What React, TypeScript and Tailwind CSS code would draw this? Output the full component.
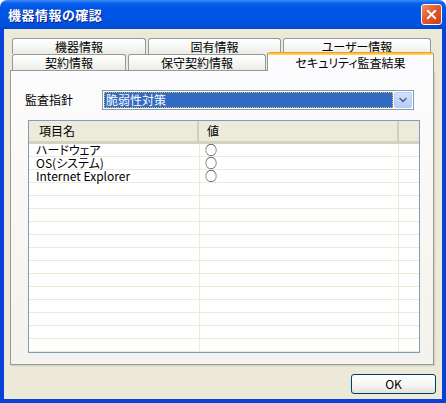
import { ChevronDown, X } from "lucide-react";

const rows = [
  { name: "ハードウェア", value: "○" },
  { name: "OS(システム)", value: "○" },
  { name: "Internet Explorer", value: "○" },
];

const blankRows = 13;

function Tab({ label, width }: { label: string; width: string }) {
  return (
    <div
      className={`${width} h-[16px] shrink-0 border border-b-0 border-[#919B9C] rounded-t-[3px] bg-[linear-gradient(to_bottom,#FFFFFF_0%,#F7F7F4_50%,#ECEBE5_100%)] text-center text-[12px] leading-[15px] text-black`}
    >
      {label}
    </div>
  );
}

export default function App() {
  return (
    <div className="w-[446px] h-[403px] flex flex-col font-['Noto_Sans_CJK_JP',sans-serif] [font-feature-settings:'palt'] select-none">
      {/* Title bar */}
      <div className="h-[29px] shrink-0 flex items-center pl-[8px] pr-[4px] rounded-t-[7px] bg-[linear-gradient(to_bottom,#3A8CF8_0%,#0A5EEA_12%,#0055E5_30%,#0054E3_70%,#0050DA_90%,#0046C8_100%)]">
        <span className="text-white text-[13px] font-bold [text-shadow:1px_1px_0_#0A1E8A] tracking-[0.5px]">
          機器情報の確認
        </span>
        <div className="ml-auto w-[21px] h-[21px] rounded-[3px] border border-white bg-[linear-gradient(135deg,#F08A62_0%,#E2552A_50%,#C8401C_100%)] flex items-center justify-center">
          <X size={15} strokeWidth={3} className="text-white" />
        </div>
      </div>

      {/* Body */}
      <div className="flex-1 flex flex-col bg-[#ECE9D8] border-x-4 border-b-4 border-[#0841DA] pt-[9px]">
        {/* Tab rows */}
        <div className="flex gap-[2px] ml-[8px] h-[16px]">
          <Tab label="機器情報" width="w-[134px]" />
          <Tab label="固有情報" width="w-[133px]" />
          <Tab label="ユーザー情報" width="w-[148px]" />
        </div>
        <div className="flex items-end ml-[8px] h-[16px]">
          <Tab label="契約情報" width="w-[114px]" />
          <div className="w-[2px]" />
          <Tab label="保守契約情報" width="w-[138px]" />
          <div className="w-[1px]" />
          <div className="relative z-10 w-[167px] h-[19px] -mb-[1px] shrink-0 border-x border-[#919B9C] rounded-t-[3px] overflow-hidden bg-[#FCFCFE] flex flex-col">
            <div className="h-[3px] bg-[linear-gradient(to_bottom,#E68B2C,#FFC73C,#FFD96B)]" />
            <div className="flex-1 text-center text-[12px] leading-[15px] text-black">セキュリティ監査結果</div>
          </div>
        </div>

        {/* Tab panel */}
        <div className="ml-[6px] w-[424px] h-[295px] shrink-0 border border-[#919B9C] shadow-[1px_1px_0_#D6D3C4,2px_2px_0_#E4E1D2] bg-[linear-gradient(to_bottom,#FCFCFE_0%,#F7F6F1_60%,#F3F2EC_100%)] pl-[14px] pt-[19px] flex flex-col">
          <div className="flex items-center h-[20px]">
            <span className="w-[77px] text-[12px] text-black leading-none">監査指針</span>
            <div className="w-[312px] h-[20px] border border-[#7F9DB9] bg-white flex items-center p-[1px]">
              <div className="flex-1 h-[16px] bg-[#316AC5] outline-1 outline-dotted outline-[#E8B83A] -outline-offset-1 text-white text-[12px] leading-[16px] pl-[2px]">
                脆弱性対策
              </div>
              <div className="w-[18px] h-[16px] ml-[1px] rounded-[2px] border border-[#B9CCF5] bg-[linear-gradient(to_bottom,#D3E0FD,#B7CAF5)] flex items-center justify-center">
                <ChevronDown size={12} strokeWidth={3} className="text-[#4D6185]" />
              </div>
            </div>
          </div>

          {/* List */}
          <div className="mt-[10px] ml-[3px] w-[392px] h-[233px] border border-[#7F9DB9] bg-white overflow-hidden flex flex-col">
            <div className="h-[23px] shrink-0 flex bg-[#EBEADB] border-b-[3px] border-[#D6D2C2] text-[12px] text-black">
              <div className="w-[170px] flex items-center pl-[10px] border-r-2 border-[#D0CEBF]">項目名</div>
              <div className="w-[200px] flex items-center pl-[8px] border-r-2 border-[#D0CEBF]">値</div>
              <div className="flex-1" />
            </div>
            {rows.map((r) => (
              <div key={r.name} className="h-[13px] shrink-0 flex border-b border-[#EBEADB] text-[12px] leading-[12px] text-black">
                <div className="w-[171px] pl-[7px] border-r border-[#EBEADB] whitespace-nowrap">{r.name}</div>
                <div className="w-[199px] pl-[5px] border-r border-[#EBEADB]">{r.value}</div>
                <div className="flex-1" />
              </div>
            ))}
            {Array.from({ length: blankRows }).map((_, i) => (
              <div key={i} className="h-[13px] shrink-0 flex border-b border-[#EBEADB]">
                <div className="w-[171px] border-r border-[#EBEADB]" />
                <div className="w-[199px] border-r border-[#EBEADB]" />
                <div className="flex-1" />
              </div>
            ))}
          </div>
        </div>

        {/* OK */}
        <div className="flex justify-end pr-[6px] mt-[9px]">
          <button className="w-[85px] h-[20px] rounded-[3px] border border-[#003C74] bg-[linear-gradient(to_bottom,#FFFFFF_0%,#F4F4F0_60%,#E3E1D6_100%)] text-[12px] leading-none text-black">
            OK
          </button>
        </div>
      </div>
    </div>
  );
}
